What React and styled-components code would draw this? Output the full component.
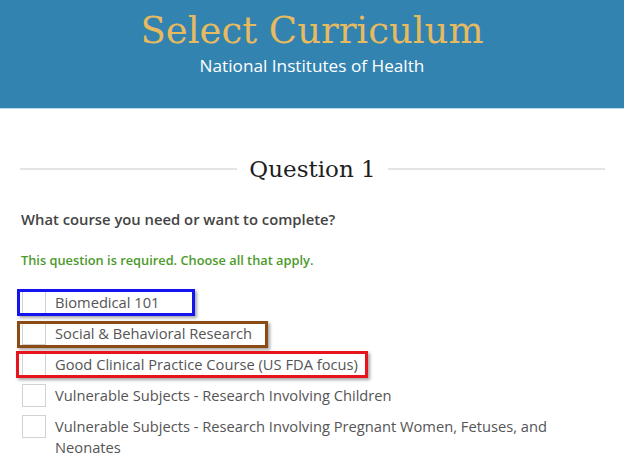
import React from 'react';
import styled, { createGlobalStyle } from 'styled-components';

const Global = createGlobalStyle`
  html, body { margin: 0; padding: 0; background: #fff; }
  body {
    font-family: "Open Sans", "Liberation Sans", sans-serif;
    width: 624px;
    height: 454px;
    overflow: hidden;
  }
  * { box-sizing: border-box; }
`;

const Header = styled.header`
  background: #3383b1;
  height: 109px;
  border-bottom: 1px solid #b9dcec;
  display: flex;
  flex-direction: column;
  align-items: center;
  padding-top: 7px;
`;

const Title = styled.h1`
  margin: 0;
  font-family: "DejaVu Serif", "Liberation Serif", serif;
  font-weight: 400;
  font-size: 37px;
  line-height: 47px;
  color: #e6ba5e;
`;

const Subtitle = styled.div`
  font-size: 17.2px;
  line-height: 24px;
  color: #ffffff;
`;

const Main = styled.main`
  padding: 0 19px 0 20px;
`;

const SectionHeading = styled.h2`
  margin: 45px 0 0;
  display: flex;
  align-items: center;
  gap: 12px;
  font-family: "DejaVu Serif", "Liberation Serif", serif;
  font-weight: 400;
  font-size: 23px;
  line-height: 30px;
  color: #1e1e1e;
  &::before, &::after {
    content: "";
    flex: 1;
    height: 2px;
    background: #e4e4e4;
  }
`;

const Prompt = styled.p`
  margin: 24px 0 0 1px;
  font-size: 14.8px;
  font-weight: 600;
  line-height: 22px;
  color: #444;
`;

const Hint = styled.p`
  margin: 20px 0 0 1px;
  font-size: 12.8px;
  font-weight: 600;
  line-height: 20px;
  color: #4c9a2a;
`;

const List = styled.ul`
  list-style: none;
  margin: 21px 0 0;
  padding: 0 0 0 2px;
`;

const Row = styled.li`
  position: relative;
  display: flex;
  align-items: flex-start;
  gap: 9px;
  margin-bottom: 8px;
`;

const Box = styled.span`
  flex: none;
  width: 24px;
  height: 23px;
  border: 1px solid #d2d2d2;
  background: #fff;
`;

const Label = styled.span`
  padding-top: 1px;
  font-size: 14.7px;
  line-height: 21px;
  color: #555;
`;

const Highlight = styled.span`
  position: absolute;
  left: ${p => p.$left}px;
  top: ${p => p.$top}px;
  width: ${p => p.$width}px;
  height: 27px;
  border: 3px solid ${p => p.$color};
  box-shadow: 2px 2px 3px rgba(0, 0, 0, 0.35);
  pointer-events: none;
`;

const items = [
  { label: 'Biomedical 101', hl: { color: '#1414f0', left: -5, top: -2, width: 178 } },
  { label: 'Social & Behavioral Research', hl: { color: '#8a4b14', left: -5, top: -1, width: 251 } },
  { label: 'Good Clinical Practice Course (US FDA focus)', hl: { color: '#e8141b', left: -6, top: -2, width: 352 } },
  { label: 'Vulnerable Subjects - Research Involving Children' },
  { label: 'Vulnerable Subjects - Research Involving Pregnant Women, Fetuses, and Neonates' },
];

export default function App() {
  return (
    <>
      <Global />
      <Header>
        <Title>Select Curriculum</Title>
        <Subtitle>National Institutes of Health</Subtitle>
      </Header>
      <Main>
        <SectionHeading>Question 1</SectionHeading>
        <Prompt>What course you need or want to complete?</Prompt>
        <Hint>This question is required. Choose all that apply.</Hint>
        <List>
          {items.map(it => (
            <Row key={it.label}>
              <Box />
              <Label>{it.label}</Label>
              {it.hl && (
                <Highlight
                  $color={it.hl.color}
                  $left={it.hl.left}
                  $top={it.hl.top}
                  $width={it.hl.width}
                />
              )}
            </Row>
          ))}
        </List>
      </Main>
    </>
  );
}
